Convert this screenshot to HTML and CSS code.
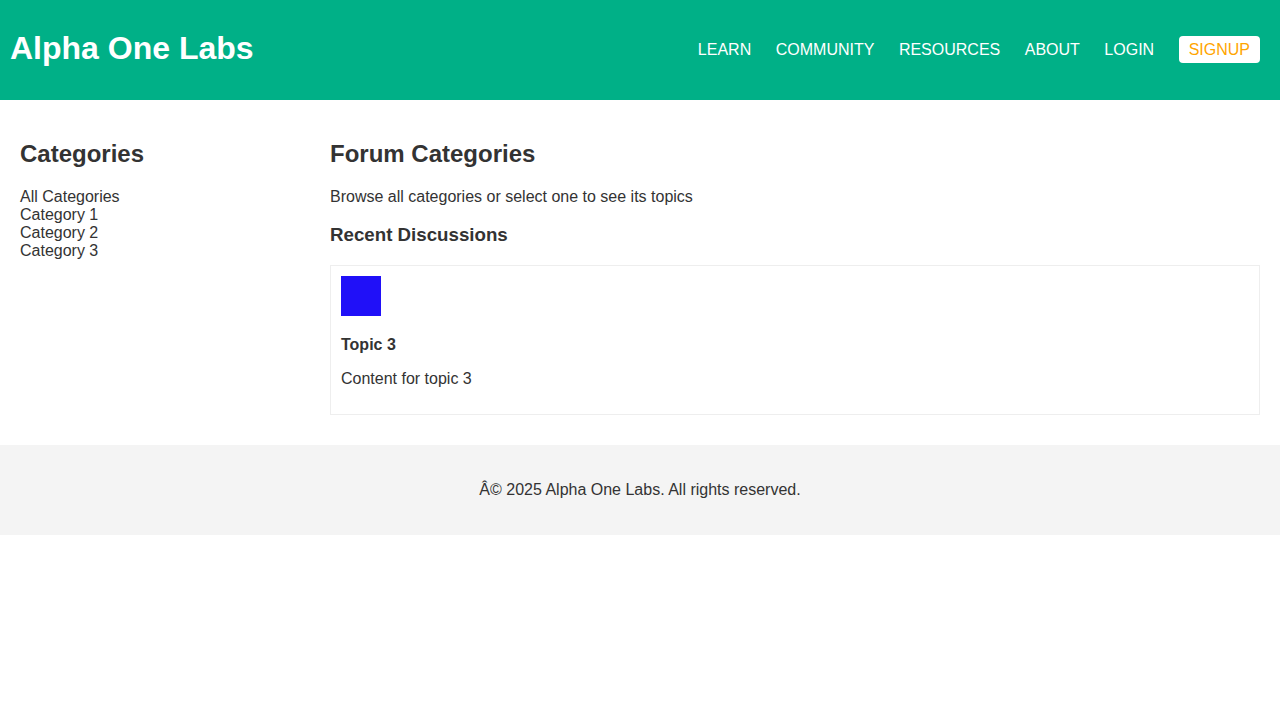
FILE: index.html
```html
<!DOCTYPE html>
<html lang="en">
<head>
<meta charset="utf-8">
<title>Alpha One Labs</title>
<link rel="stylesheet" href="styles.css">
</head>
<body>
<header class="site-header">
  <h1 class="brand">Alpha One Labs</h1>
  <nav class="nav">
    <a href="#" class="nav-link">LEARN</a>
    <a href="#" class="nav-link">COMMUNITY</a>
    <a href="#" class="nav-link">RESOURCES</a>
    <a href="#" class="nav-link">ABOUT</a>
    <a href="#" class="nav-link">LOGIN</a>
    <a href="#" class="nav-link signup">SIGNUP</a>
  </nav>
</header>
<main class="layout">
  <aside class="sidebar">
    <h2 class="heading">Categories</h2>
    <ul class="cat-list">
      <li>All Categories</li>
      <li>Category 1</li>
      <li>Category 2</li>
      <li>Category 3</li>
    </ul>
  </aside>
  <section class="content">
    <h2 class="heading">Forum Categories</h2>
    <p class="lead">Browse all categories or select one to see its topics</p>
    <h3 class="sub">Recent Discussions</h3>
    <div class="topic">
      <div class="avatar"></div>
      <h4 class="topic-title">Topic 3</h4>
      <p class="topic-body">Content for topic 3</p>
    </div>
  </section>
</main>
<footer class="site-footer">
  <p class="copy">Â© 2025 Alpha One Labs. All rights reserved.</p>
</footer>
</body>
</html>
```

FILE: styles.css
```css
body {
  margin: 0;
  font-family: "Liberation Sans", Arial, sans-serif;
  font-size: 16px;
  color: #333;
  background: #fff;
}

.site-header {
  background: #00b087;
  display: flex;
  align-items: center;
  justify-content: space-between;
  padding: 8px 20px 12px 10px;
  height: 100px;
  box-sizing: border-box;
}

.brand {
  margin: 0;
  font-size: 32px;
  font-weight: bold;
  color: #fff;
}

.nav {
  display: flex;
  align-items: center;
  gap: 24.5px;
  padding-top: 2px;
}

.nav-link {
  color: #fff;
  text-decoration: none;
  font-size: 16px;
  line-height: 19px;
}

.nav-link.signup {
  background: #fff;
  color: #ffa500;
  padding: 4px 10px;
  border-radius: 4px;
}

.layout {
  display: grid;
  grid-template-columns: 280px 1fr;
  gap: 30px;
  padding: 20px;
}

.heading {
  font-size: 24px;
  margin: 20px 0;
}

.cat-list {
  list-style: none;
  margin: 0;
  padding: 0;
}

.lead {
  margin: 16px 0;
}

.sub {
  font-size: 18.72px;
  margin: 18px 0 18.5px;
}

.topic {
  border: 1px solid #eee;
  padding: 10px;
  margin-bottom: 10px;
}

.avatar {
  width: 40px;
  height: 40px;
  background: #2010f8;
}

.topic-title {
  font-size: 16px;
  margin: 20.5px 0 16px;
}

.topic-body {
  margin: 16px 0;
}

.site-footer {
  background: #f4f4f4;
  padding: 20px;
  text-align: center;
}

.copy {
  margin: 16px 0;
}
```
